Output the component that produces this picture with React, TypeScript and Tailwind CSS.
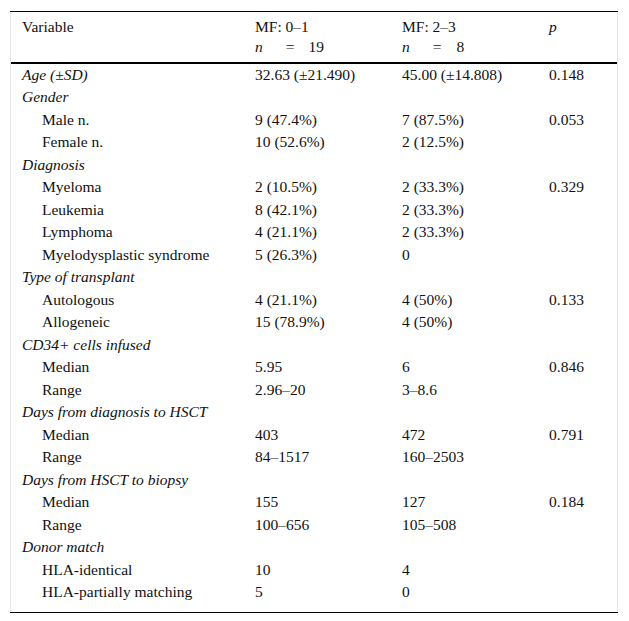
const rows: { label: string; kind: 'head' | 'sub'; a?: string; b?: string; p?: string }[] = [
  { label: 'Age (±SD)', kind: 'head', a: '32.63 (±21.490)', b: '45.00 (±14.808)', p: '0.148' },
  { label: 'Gender', kind: 'head' },
  { label: 'Male n.', kind: 'sub', a: '9 (47.4%)', b: '7 (87.5%)', p: '0.053' },
  { label: 'Female n.', kind: 'sub', a: '10 (52.6%)', b: '2 (12.5%)' },
  { label: 'Diagnosis', kind: 'head' },
  { label: 'Myeloma', kind: 'sub', a: '2 (10.5%)', b: '2 (33.3%)', p: '0.329' },
  { label: 'Leukemia', kind: 'sub', a: '8 (42.1%)', b: '2 (33.3%)' },
  { label: 'Lymphoma', kind: 'sub', a: '4 (21.1%)', b: '2 (33.3%)' },
  { label: 'Myelodysplastic syndrome', kind: 'sub', a: '5 (26.3%)', b: '0' },
  { label: 'Type of transplant', kind: 'head' },
  { label: 'Autologous', kind: 'sub', a: '4 (21.1%)', b: '4 (50%)', p: '0.133' },
  { label: 'Allogeneic', kind: 'sub', a: '15 (78.9%)', b: '4 (50%)' },
  { label: 'CD34+ cells infused', kind: 'head' },
  { label: 'Median', kind: 'sub', a: '5.95', b: '6', p: '0.846' },
  { label: 'Range', kind: 'sub', a: '2.96–20', b: '3–8.6' },
  { label: 'Days from diagnosis to HSCT', kind: 'head' },
  { label: 'Median', kind: 'sub', a: '403', b: '472', p: '0.791' },
  { label: 'Range', kind: 'sub', a: '84–1517', b: '160–2503' },
  { label: 'Days from HSCT to biopsy', kind: 'head' },
  { label: 'Median', kind: 'sub', a: '155', b: '127', p: '0.184' },
  { label: 'Range', kind: 'sub', a: '100–656', b: '105–508' },
  { label: 'Donor match', kind: 'head' },
  { label: 'HLA-identical', kind: 'sub', a: '10', b: '4' },
  { label: 'HLA-partially matching', kind: 'sub', a: '5', b: '0' },
];

const grid = 'grid grid-cols-[233px_147px_147px_1fr] pl-[11px]';

export default function App() {
  return (
    <div className="min-h-[621px] bg-white pt-[11px] text-[15.5px] leading-none text-[#111] font-['Liberation_Serif','Times_New_Roman',serif]">
      <div className="mx-[10px] w-[608px] border-t border-black">
        <div className="border-x border-[#e4e4e4]">
          <div className={`${grid} pt-[7px] pb-[7px]`}>
            <div className="h-[16px] flex items-center">Variable</div>
            <div>
              <div className="h-[16px] flex items-center">MF: 0–1</div>
              <div className="mt-[4px] h-[16px] flex items-center">
                <i>n</i>
                <span className="ml-[23px]">=</span>
                <span className="ml-[14px]">19</span>
              </div>
            </div>
            <div>
              <div className="h-[16px] flex items-center">MF: 2–3</div>
              <div className="mt-[4px] h-[16px] flex items-center">
                <i>n</i>
                <span className="ml-[23px]">=</span>
                <span className="ml-[15px]">8</span>
              </div>
            </div>
            <div className="h-[16px] flex items-center italic">p</div>
          </div>
          <div className="border-t-2 border-black" />
          <div className="pb-[8px]">
            {rows.map((r, i) => (
              <div key={i} className={`${grid} h-[22.5px] items-center pb-[2px]`}>
                <div className={r.kind === 'head' ? 'italic' : 'pl-[20px]'}>{r.label}</div>
                <div>{r.a ?? ''}</div>
                <div>{r.b ?? ''}</div>
                <div>{r.p ?? ''}</div>
              </div>
            ))}
          </div>
        </div>
        <div className="border-t border-black" />
      </div>
    </div>
  );
}
